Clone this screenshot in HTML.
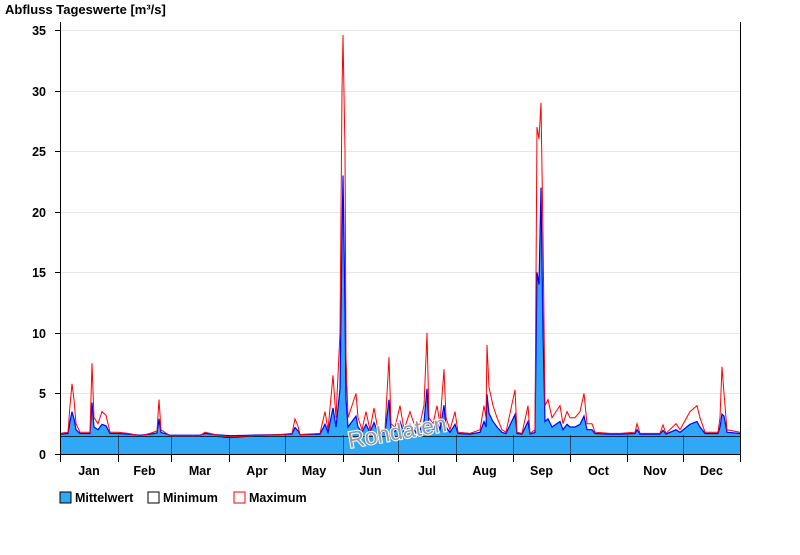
<!DOCTYPE html>
<html><head><meta charset="utf-8"><style>
body{margin:0;background:#fff;width:800px;height:550px;overflow:hidden;font-family:"Liberation Sans",Arial,sans-serif}
text{font-family:"Liberation Sans",Arial,sans-serif;font-weight:bold;font-size:12.5px;fill:#000}
</style></head><body>
<svg id="s" width="800" height="550" xmlns="http://www.w3.org/2000/svg">
<text x="5" y="14" style="font-size:13px">Abfluss Tageswerte [m³/s]</text>
<g id="grid" stroke="#e6e6e6" stroke-width="1"></g>
<path id="fill" fill="#2ea8f7" stroke="none"/>
<g id="mt" stroke="#2a4a6a" stroke-width="1"></g>
<polyline id="mn" fill="none" stroke="#0000ff" stroke-width="1.2"/>
<polyline id="mi" fill="none" stroke="#000" stroke-width="0.8"/>
<polyline id="mx" fill="none" stroke="#ff0000" stroke-width="1"/>
<text x="347" y="440" transform="rotate(-10 395 430)" style="font-size:23px;font-weight:normal;fill:#999;stroke:#fff;stroke-width:2;paint-order:stroke">Rohdaten</text>
<g stroke="#000" stroke-width="1">
<line x1="60.5" y1="22" x2="60.5" y2="454"/>
<line x1="740.5" y1="22" x2="740.5" y2="454"/>
<line x1="60" y1="454.5" x2="741" y2="454.5"/>
</g>
<g id="ax"></g>
<rect x="60" y="492" width="11" height="11" fill="#2ea8f7" stroke="#000"/>
<text x="75" y="502">Mittelwert</text>
<rect x="148" y="492" width="11" height="11" fill="#fff" stroke="#000"/>
<text x="163" y="502">Minimum</text>
<rect x="234" y="492" width="11" height="11" fill="#fff" stroke="#f00"/>
<text x="249" y="502">Maximum</text>
</svg>
<script>
var NS="http://www.w3.org/2000/svg";
function Y(v){return 454-12.11*v;}
function el(t,a,p){var e=document.createElementNS(NS,t);for(var k in a)e.setAttribute(k,a[k]);if(p)p.appendChild(e);return e;}
var g=document.getElementById('grid'),ax=document.getElementById('ax'),mt=document.getElementById('mt');
for(var v=0;v<=35;v+=5){var y=Math.round(Y(v))+0.5;if(v>0)el('line',{x1:61,x2:740,y1:y,y2:y},g);
el('line',{x1:55,x2:60,y1:y,y2:y,stroke:'#000'},ax);var t=el('text',{x:46,y:y+4.5,'text-anchor':'end'},ax);t.textContent=v;}
var b=[60,118,171,229,285,343,398,456,513,570,627,683,740];
var m=['Jan','Feb','Mar','Apr','May','Jun','Jul','Aug','Sep','Oct','Nov','Dec'];
b.forEach(function(x){el('line',{x1:x+.5,x2:x+.5,y1:454,y2:462,stroke:'#000'},ax);if(x>60&&x<740)el('line',{x1:x+.5,x2:x+.5,y1:435,y2:454},mt);});
for(var i=0;i<12;i++){var t=el('text',{x:(b[i]+b[i+1])/2,y:475,'text-anchor':'middle'},ax);t.textContent=m[i];}
var mx=[60,1.7,68,1.8,70,4,72,5.8,74,4.5,76,2.5,80,1.8,90,1.8,92,7.5,94,3,98,2.5,102,3.5,106,3.2,110,1.8,118,1.8,128,1.7,140,1.5,150,1.7,157,1.9,159,4.5,161,2,170,1.5,200,1.5,205,1.8,215,1.6,230,1.4,250,1.5,280,1.6,292,1.7,295,2.9,298,2.3,300,1.6,320,1.7,325,3.5,328,2,333,6.5,336,3,340,10,342,30,343,34.6,345,25,346,8,348,3,352,4,356,5,358,3,362,2,366,3.5,370,2,374,3.8,378,2,385,2,389,8,391,2.5,395,2.2,400,4,404,2,410,3.5,416,2,420,2.5,424,4,427,10,429,3,433,2.5,437,4,440,2.5,444,7,446,3,450,2,455,3.5,458,1.8,470,1.7,480,2,484,4,486,3,487,9,489,5.5,493,4,497,3,502,2,506,1.8,515,5.3,517,1.8,522,1.7,528,4,530,1.7,535,2,537,27,539,26,541,29,543,18,545,4,548,4.5,552,3,556,3.5,560,4,563,2.5,567,3.5,570,3,575,3,580,3.5,584,5,587,2.5,592,2.5,595,1.8,610,1.7,620,1.7,635,1.8,637,2.5,640,1.7,660,1.7,663,2.4,666,1.7,676,2.5,680,2,690,3.5,697,4,700,3,705,1.8,718,1.8,720,3,722,7.2,724,5,727,2,740,1.8];
var sp={343:23,342:18,345:12,537:15,539:14,541:22,543:10,727:1.8,722:3.3};
var pm=[],pn=[],pi=[],f='M60,454';
for(var i=0;i<mx.length;i+=2){var x=mx[i],v=mx[i+1];var mv=sp[x]!==undefined?sp[x]:1.6+(v-1.6)*0.45;var mi=Math.min(v,1.5)-0.05;
pm.push(x+','+Y(v).toFixed(1));pn.push(x+','+Y(mv).toFixed(1));pi.push(x+','+Y(mi).toFixed(1));f+=' L'+x+','+Y(mv).toFixed(1);}
f+=' L740,454 Z';
document.getElementById('fill').setAttribute('d',f);
document.getElementById('mx').setAttribute('points',pm.join(' '));
document.getElementById('mn').setAttribute('points',pn.join(' '));
document.getElementById('mi').setAttribute('points',pi.join(' '));
</script>
</body></html>
